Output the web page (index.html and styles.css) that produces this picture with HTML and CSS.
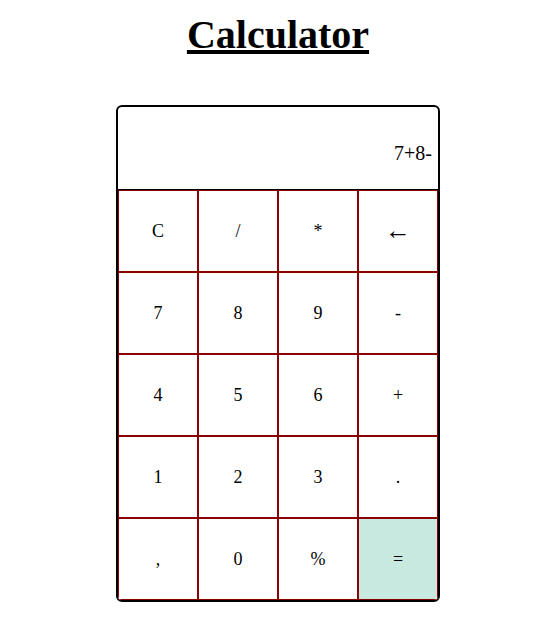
FILE: index.html
```html
<!DOCTYPE html>
<html>
<head>
<meta charset="utf-8">
<link rel="stylesheet" href="styles.css">
</head>
<body>
<div class="page">
  <h1 class="title">Calculator</h1>
  <div class="calc">
    <div class="display">7+8-</div>
    <div class="keys">
      <button class="key">C</button>
      <button class="key">/</button>
      <button class="key">*</button>
      <button class="key arrow">←</button>
      <button class="key">7</button>
      <button class="key">8</button>
      <button class="key">9</button>
      <button class="key">-</button>
      <button class="key">4</button>
      <button class="key">5</button>
      <button class="key">6</button>
      <button class="key">+</button>
      <button class="key">1</button>
      <button class="key">2</button>
      <button class="key">3</button>
      <button class="key">.</button>
      <button class="key">,</button>
      <button class="key">0</button>
      <button class="key">%</button>
      <button class="key equals">=</button>
    </div>
  </div>
</div>
</body>
</html>
```
FILE: styles.css
```css
html, body {
  margin: 0;
  padding: 0;
  background: #fff;
  font-family: "Liberation Serif", "Times New Roman", serif;
  color: #000;
}
.page {
  padding-left: 17px;
  display: flex;
  flex-direction: column;
  align-items: center;
}
.title {
  font-size: 40px;
  font-weight: bold;
  text-decoration: underline;
  margin: 12px 0 0;
  line-height: 46px;
}
.calc {
  margin-top: 47px;
  width: 320px;
  border: 2px solid #000;
  border-radius: 6px;
  overflow: hidden;
}
.display {
  border-bottom: 1px solid #000;
  display: flex;
  align-items: flex-end;
  justify-content: flex-end;
  padding: 0 6px 24px 0;
  box-sizing: border-box;
  font-size: 20px;
  height: 83px;
}
.keys {
  display: grid;
  grid-template-columns: repeat(4, 80px);
  grid-auto-rows: 82px;
}
.key {
  margin: 0;
  padding: 0;
  border: 1px solid #8b0000;
  background: #fff;
  font-family: "Liberation Serif", "Times New Roman", serif;
  font-size: 18px;
  color: #000;
}
.key.arrow {
  font-size: 26px;
}
.key.equals {
  background: #c7e9df;
}
```
